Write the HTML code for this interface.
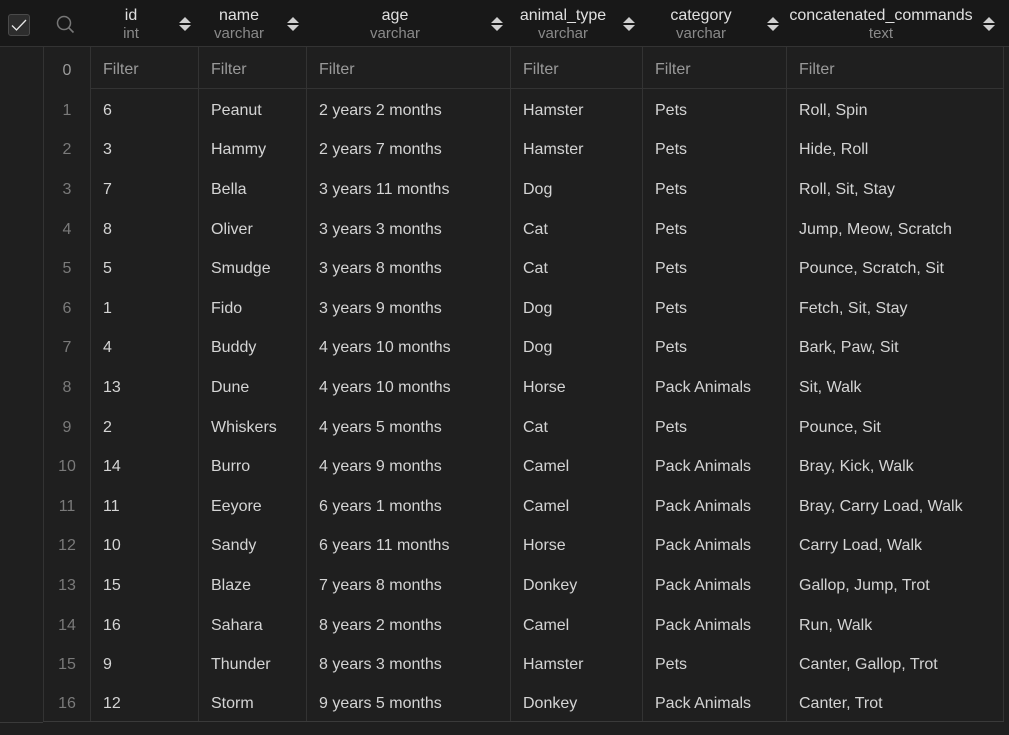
<!DOCTYPE html>
<html><head><meta charset="utf-8">
<style>
*{margin:0;padding:0;box-sizing:border-box}
body{width:1009px;height:735px;background:#1f1f1f;font-family:"Liberation Sans",sans-serif;font-size:16px;color:#d4d4d4;position:relative;overflow:hidden}
.hdr{position:absolute;left:0;top:0;width:1009px;height:47px;background:#181818;border-bottom:1px solid #333}
.hc{position:absolute;top:7px;text-align:center;line-height:18px}
.hc .n{color:#e0e0e0;font-size:16px}
.hc .t{color:#8a8a8a;font-size:15px}
.sort{position:absolute;top:16px;width:12px;height:16px}
.cb{position:absolute;left:8px;top:14px;width:22px;height:22px;border:1px solid #4a4a4a;border-radius:3px;background:#2d2d2d}
table{position:absolute;left:43px;top:47px;border-collapse:collapse;table-layout:fixed;width:960px}
td{border-left:1px solid #333;border-right:1px solid #333;padding-left:12px;padding-top:6px;white-space:nowrap;overflow:hidden;height:39.6px}
td.rn{color:#7a7a7a;text-align:center;padding:6px 0 0 0;border-left:1px solid #333}
tr.f td{height:41px;color:#9a9a9a;border-bottom:1px solid #333}
tr.f td.rn{border-bottom:none}
tr:last-child td{border-bottom:1px solid #3a3a3a}
.bl{position:absolute;left:0;top:722px;width:43px;height:1px;background:#3a3a3a}
</style></head><body>
<div class="hdr">
<div class="cb"><svg width="22" height="22" viewBox="0 0 22 22" style="position:absolute;left:-1px;top:-1px"><path d="M4 11.5 L8.5 16 L18 6" fill="none" stroke="#e8e8e8" stroke-width="1.3"/></svg></div>
<svg style="position:absolute;left:56px;top:15px" width="19" height="19" viewBox="0 0 19 19"><circle cx="8" cy="8" r="6.5" fill="none" stroke="#777" stroke-width="1.5"/><path d="M12.7 12.7 L17.5 17.5" stroke="#777" stroke-width="1.6"/></svg>
<div class="hc" style="left:90px;width:82px"><div class="n">id</div><div class="t">int</div></div>
<div class="hc" style="left:198px;width:82px"><div class="n">name</div><div class="t">varchar</div></div>
<div class="hc" style="left:306px;width:178px"><div class="n">age</div><div class="t">varchar</div></div>
<div class="hc" style="left:510px;width:106px"><div class="n">animal_type</div><div class="t">varchar</div></div>
<div class="hc" style="left:642px;width:118px"><div class="n">category</div><div class="t">varchar</div></div>
<div class="hc" style="left:780px;width:202px"><div class="n">concatenated_commands</div><div class="t">text</div></div>
<svg class="sort" style="left:179px" viewBox="0 0 12 16"><path d="M6 1 L12 7 H0Z M0 9 H12 L6 15Z" fill="#cfcfcf"/></svg>
<svg class="sort" style="left:287px" viewBox="0 0 12 16"><path d="M6 1 L12 7 H0Z M0 9 H12 L6 15Z" fill="#cfcfcf"/></svg>
<svg class="sort" style="left:491px" viewBox="0 0 12 16"><path d="M6 1 L12 7 H0Z M0 9 H12 L6 15Z" fill="#cfcfcf"/></svg>
<svg class="sort" style="left:623px" viewBox="0 0 12 16"><path d="M6 1 L12 7 H0Z M0 9 H12 L6 15Z" fill="#cfcfcf"/></svg>
<svg class="sort" style="left:767px" viewBox="0 0 12 16"><path d="M6 1 L12 7 H0Z M0 9 H12 L6 15Z" fill="#cfcfcf"/></svg>
<svg class="sort" style="left:983px" viewBox="0 0 12 16"><path d="M6 1 L12 7 H0Z M0 9 H12 L6 15Z" fill="#cfcfcf"/></svg>
</div>
<table>
<colgroup><col style="width:47px"><col style="width:108px"><col style="width:108px"><col style="width:204px"><col style="width:132px"><col style="width:144px"><col style="width:217px"></colgroup>
<tr class="f"><td class="rn">0</td><td>Filter</td><td>Filter</td><td>Filter</td><td>Filter</td><td>Filter</td><td>Filter</td></tr>
<tr><td class="rn">1</td><td>6</td><td>Peanut</td><td>2 years 2 months</td><td>Hamster</td><td>Pets</td><td>Roll, Spin</td></tr>
<tr><td class="rn">2</td><td>3</td><td>Hammy</td><td>2 years 7 months</td><td>Hamster</td><td>Pets</td><td>Hide, Roll</td></tr>
<tr><td class="rn">3</td><td>7</td><td>Bella</td><td>3 years 11 months</td><td>Dog</td><td>Pets</td><td>Roll, Sit, Stay</td></tr>
<tr><td class="rn">4</td><td>8</td><td>Oliver</td><td>3 years 3 months</td><td>Cat</td><td>Pets</td><td>Jump, Meow, Scratch</td></tr>
<tr><td class="rn">5</td><td>5</td><td>Smudge</td><td>3 years 8 months</td><td>Cat</td><td>Pets</td><td>Pounce, Scratch, Sit</td></tr>
<tr><td class="rn">6</td><td>1</td><td>Fido</td><td>3 years 9 months</td><td>Dog</td><td>Pets</td><td>Fetch, Sit, Stay</td></tr>
<tr><td class="rn">7</td><td>4</td><td>Buddy</td><td>4 years 10 months</td><td>Dog</td><td>Pets</td><td>Bark, Paw, Sit</td></tr>
<tr><td class="rn">8</td><td>13</td><td>Dune</td><td>4 years 10 months</td><td>Horse</td><td>Pack Animals</td><td>Sit, Walk</td></tr>
<tr><td class="rn">9</td><td>2</td><td>Whiskers</td><td>4 years 5 months</td><td>Cat</td><td>Pets</td><td>Pounce, Sit</td></tr>
<tr><td class="rn">10</td><td>14</td><td>Burro</td><td>4 years 9 months</td><td>Camel</td><td>Pack Animals</td><td>Bray, Kick, Walk</td></tr>
<tr><td class="rn">11</td><td>11</td><td>Eeyore</td><td>6 years 1 months</td><td>Camel</td><td>Pack Animals</td><td>Bray, Carry Load, Walk</td></tr>
<tr><td class="rn">12</td><td>10</td><td>Sandy</td><td>6 years 11 months</td><td>Horse</td><td>Pack Animals</td><td>Carry Load, Walk</td></tr>
<tr><td class="rn">13</td><td>15</td><td>Blaze</td><td>7 years 8 months</td><td>Donkey</td><td>Pack Animals</td><td>Gallop, Jump, Trot</td></tr>
<tr><td class="rn">14</td><td>16</td><td>Sahara</td><td>8 years 2 months</td><td>Camel</td><td>Pack Animals</td><td>Run, Walk</td></tr>
<tr><td class="rn">15</td><td>9</td><td>Thunder</td><td>8 years 3 months</td><td>Hamster</td><td>Pets</td><td>Canter, Gallop, Trot</td></tr>
<tr><td class="rn">16</td><td>12</td><td>Storm</td><td>9 years 5 months</td><td>Donkey</td><td>Pack Animals</td><td>Canter, Trot</td></tr>
</table>
<div class="bl"></div>
</body></html>
